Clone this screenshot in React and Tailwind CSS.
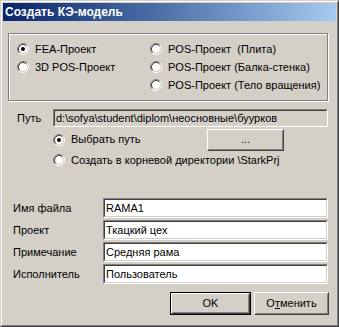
import React from 'react';

const font = "font-['Liberation_Sans',Arial,sans-serif]";

function Radio({ checked }) {
  return (
    <svg width="12" height="12" viewBox="0 0 12 12" className="shrink-0">
      <circle cx="6" cy="6" r="4" fill="#fff" />
      <path d="M2.11 9.89A5.5 5.5 0 0 1 9.89 2.11" stroke="#808080" fill="none" />
      <path d="M9.89 2.11A5.5 5.5 0 0 1 2.11 9.89" stroke="#fff" fill="none" />
      <path d="M2.82 9.18A4.5 4.5 0 0 1 9.18 2.82" stroke="#404040" fill="none" />
      <path d="M9.18 2.82A4.5 4.5 0 0 1 2.82 9.18" stroke="#d4d0c8" fill="none" />
      {checked && <circle cx="6" cy="6" r="2" fill="#000" />}
    </svg>
  );
}

function Option({ checked, children, className = '' }) {
  return (
    <div className={`flex items-center gap-[6px] h-[18px] ${className}`}>
      <Radio checked={checked} />
      <span className="whitespace-pre">{children}</span>
    </div>
  );
}

function Sunken({ children, className = '', inner = 'bg-white' }) {
  return (
    <div className={`border border-t-[#808080] border-l-[#808080] border-b-white border-r-white ${className}`}>
      <div className={`h-full border border-t-[#404040] border-l-[#404040] border-b-[#d4d0c8] border-r-[#d4d0c8] flex items-center pl-px whitespace-nowrap overflow-hidden ${inner}`}>
        {children}
      </div>
    </div>
  );
}

function Button({ children, isDefault, className = '' }) {
  const body = (
    <div className="h-full border border-t-white border-l-white border-b-[#404040] border-r-[#404040]">
      <div className="h-full border border-t-[#d4d0c8] border-l-[#d4d0c8] border-b-[#808080] border-r-[#808080] flex items-center justify-center">
        {children}
      </div>
    </div>
  );
  return isDefault ? (
    <div className={`border border-black ${className}`}>{body}</div>
  ) : (
    <div className={className}>{body}</div>
  );
}

function Field({ label, value }) {
  return (
    <div className="flex items-center h-[20px]">
      <span className="w-[100px] pl-[10px]">{label}</span>
      <Sunken className="w-[225px] h-[20px]">{value}</Sunken>
    </div>
  );
}

export default function App() {
  return (
    <div className={`w-[339px] h-[327px] bg-[#d4d0c8] border border-t-[#d4d0c8] border-l-[#d4d0c8] border-r-[#404040] border-b-[#404040] text-[11px] text-black leading-none ${font}`}>
      <div className="h-full border border-t-white border-l-white border-r-[#808080] border-b-[#808080] p-px flex flex-col">
        <div className="h-[18px] flex items-center pl-[2px] bg-gradient-to-r from-[#0a246a] to-[#a6caf0] text-white font-bold text-[12px]">
          Создать КЭ-модель
        </div>

        <div className="mt-[12px] ml-[5px] w-[320px] h-[68px] border border-[#808080] shadow-[1px_1px_0_#fff,inset_1px_1px_0_#fff] flex pt-[6px] pl-[8px]">
          <div className="w-[133px] flex flex-col">
            <Option checked>FEA-Проект</Option>
            <Option>3D POS-Проект</Option>
          </div>
          <div className="flex flex-col">
            <Option>{'POS-Проект  (Плита)'}</Option>
            <Option>POS-Проект (Балка-стенка)</Option>
            <Option>POS-Проект (Тело вращения)</Option>
          </div>
        </div>

        <div className="mt-[8px] flex items-center h-[18px]">
          <span className="w-[50px] pl-[14px]">Путь</span>
          <Sunken className="w-[275px] h-[18px]" inner="bg-[#d4d0c8]">
            d:\sofya\student\diplom\неосновные\буурков
          </Sunken>
        </div>

        <div className="mt-px flex items-center h-[23px] pl-[50px]">
          <Option checked className="w-[154px]">Выбрать путь</Option>
          <Button className="w-[77px] h-[22px]">...</Button>
        </div>
        <Option className="pl-[50px]">Создать в корневой директории \StarkPrj</Option>

        <div className="mt-[29px] flex flex-col gap-[2px]">
          <Field label="Имя файла" value="RAMA1" />
          <Field label="Проект" value="Ткацкий цех" />
          <Field label="Примечание" value="Средняя рама" />
          <Field label="Исполнитель" value="Пользователь" />
        </div>

        <div className="mt-[8px] flex justify-end gap-[3px] pr-[7px]">
          <Button isDefault className="w-[81px] h-[23px]">OK</Button>
          <Button className="w-[75px] h-[23px]">
            <span>
              О<span className="underline">т</span>менить
            </span>
          </Button>
        </div>
      </div>
    </div>
  );
}
